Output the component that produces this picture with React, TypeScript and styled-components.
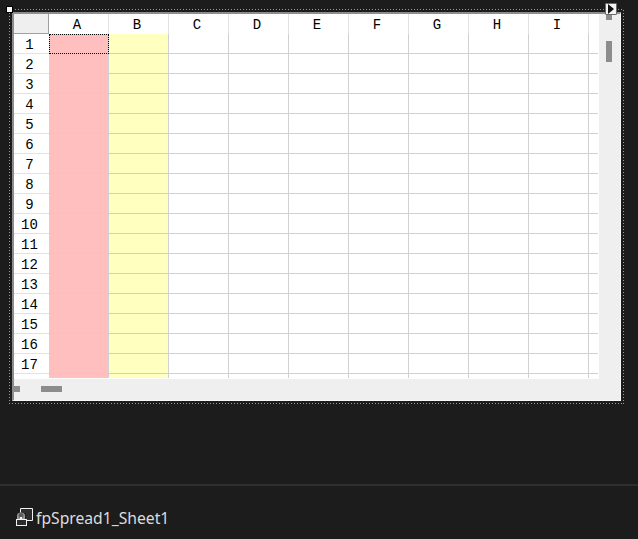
import styled, { createGlobalStyle } from 'styled-components';

const COLUMNS = ['A', 'B', 'C', 'D', 'E', 'F', 'G', 'H', 'I', ''];
const ROWS = Array.from({ length: 18 }, (_, i) => i + 1);
const LAST_LABELLED_ROW = 17;

const GlobalStyle = createGlobalStyle`
  html, body {
    margin: 0;
    padding: 0;
    background: #1c1c1c;
  }
`;

const Page = styled.div`
  width: 638px;
  height: 539px;
  display: flex;
  flex-direction: column;
  overflow: hidden;
  background: #1c1c1c;
`;

const DesignSurface = styled.div`
  height: 484px;
  padding: 9px 0 0 9px;
  box-sizing: border-box;
`;

const SelectionFrame = styled.div`
  position: relative;
  width: 615px;
  height: 395px;
  padding: 3px;
  box-sizing: border-box;
  background:
    repeating-linear-gradient(90deg, #9a9a9a 0 1px, transparent 1px 3px) top left / 100% 1px no-repeat,
    repeating-linear-gradient(90deg, #9a9a9a 0 1px, transparent 1px 3px) bottom left / 100% 1px no-repeat,
    repeating-linear-gradient(0deg, #9a9a9a 0 1px, transparent 1px 3px) top left / 1px 100% no-repeat,
    repeating-linear-gradient(0deg, #9a9a9a 0 1px, transparent 1px 3px) top right / 1px 100% no-repeat;
`;

const GrabHandle = styled.div`
  position: absolute;
  top: -3px;
  left: -3px;
  width: 5px;
  height: 5px;
  background: #fff;
  border: 1px solid #000;
`;

const SmartTag = styled.div`
  position: absolute;
  top: -6px;
  left: 596px;
  width: 10px;
  height: 10px;
  display: flex;
  align-items: center;
  justify-content: center;
  background: #f4f4f4;
  border: 1px solid #6a6a6a;
  border-radius: 1px;
  z-index: 2;
`;

const SpreadControl = styled.div`
  width: 609px;
  height: 389px;
  box-sizing: border-box;
  display: grid;
  grid-template-columns: 585px 21px;
  grid-template-rows: 365px 21px;
  border-top: 2px solid #8d8d8d;
  border-left: 2px solid #8d8d8d;
  border-right: 1px solid #f8f8f8;
  border-bottom: 1px solid #f8f8f8;
  background: #efefef;
`;

const Sheet = styled.div`
  background: #fff;
  padding: 0 1px 1px 0;
  box-sizing: border-box;
  overflow: hidden;
`;

const Grid = styled.div`
  height: 364px;
  overflow: hidden;
  display: grid;
  grid-template-columns: 35px repeat(9, 60px) 9px;
  grid-auto-rows: 20px;
  font-family: "Liberation Mono", monospace;
  font-size: 14px;
  color: #000;
`;

const Corner = styled.div`
  box-sizing: border-box;
  background: #efefef;
  border-right: 1px solid #a0a0a0;
  border-bottom: 1px solid #a0a0a0;
`;

const ColumnHeader = styled.div<{ $last?: boolean }>`
  box-sizing: border-box;
  display: flex;
  align-items: center;
  justify-content: center;
  padding: 1px 3px 0 0;
  background: #fff;
  border-right: ${(p) => (p.$last ? 'none' : '1px solid #e2e2e2')};
`;

const RowHeader = styled.div`
  box-sizing: border-box;
  display: flex;
  align-items: center;
  justify-content: center;
  padding: 3px 4px 0 0;
  background: #fff;
  border-bottom: 1px solid #e2e2e2;
`;

const Cell = styled.div<{ $fill: string; $active?: boolean; $last?: boolean }>`
  position: relative;
  box-sizing: border-box;
  background: ${(p) => p.$fill};
  border-right: ${(p) => (p.$last ? 'none' : '1px solid #d0d0d0')};
  border-bottom: 1px solid #d0d0d0;

  ${(p) =>
    p.$active &&
    `&::after {
      content: '';
      position: absolute;
      inset: 0 -1px -1px 0;
      border: 1px dotted #000;
    }`}
`;

const VerticalScroll = styled.div`
  display: flex;
  flex-direction: column;
  align-items: center;
  padding-right: 1px;
`;

const HorizontalScroll = styled.div`
  display: flex;
  align-items: center;
  padding-bottom: 1px;
  grid-column: 1 / -1;
`;

const ArrowStub = styled.div`
  background: #8c8c8c;
  width: 6px;
  height: 6px;
`;

const Thumb = styled.div<{ $vertical?: boolean }>`
  background: #8c8c8c;
  width: ${(p) => (p.$vertical ? '6px' : '21px')};
  height: ${(p) => (p.$vertical ? '21px' : '6px')};
  margin: ${(p) => (p.$vertical ? '21px 0 0' : '0 0 0 21px')};
`;

const Tray = styled.div`
  flex: 1;
  display: flex;
  align-items: center;
  gap: 3px;
  padding: 8px 0 0 16px;
  border-top: 2px solid #2e2e2e;
`;

const TrayLabel = styled.span`
  font-family: "Noto Sans", sans-serif;
  font-size: 15.7px;
  color: #dcdcdc;
  margin-top: 2px;
`;

const SheetIcon = () => (
  <svg width="17" height="18" viewBox="0 0 17 18" fill="none">
    <path d="M4.5 4.5V0.5H16.5V12.5H10.5" stroke="#f2f2f2" />
    <path d="M5 1H16V12H10V5H5Z" fill="#2c2c2c" />
    <path d="M1 12.5V7.5C1 5.5 3 4.5 5 4.5C7 4.5 9 5.5 9 7.5V12.5" fill="#9a9a9a" />
    <circle cx="5" cy="7.5" r="2.5" fill="#5a5a5a" />
    <rect x="0.5" y="11.5" width="10" height="6" fill="#2c2c2c" stroke="#f2f2f2" />
    <path d="M4 9h2v3H4z" fill="#f2f2f2" />
  </svg>
);

export default function App() {
  return (
    <Page>
      <GlobalStyle />
      <DesignSurface>
        <SelectionFrame>
          <GrabHandle />
          <SmartTag>
            <svg width="6" height="10" viewBox="0 0 6 10">
              <path d="M0 0L6 5L0 10Z" fill="#111" />
            </svg>
          </SmartTag>
          <SpreadControl>
            <Sheet>
              <Grid>
                <Corner />
                {COLUMNS.map((name, i) => (
                  <ColumnHeader key={i} $last={i === COLUMNS.length - 1}>
                    {name}
                  </ColumnHeader>
                ))}
                {ROWS.map((row) => [
                  <RowHeader key={`h${row}`}>{row <= LAST_LABELLED_ROW ? row : ''}</RowHeader>,
                  ...COLUMNS.map((_, c) => (
                    <Cell
                      key={`${row}-${c}`}
                      $fill={c === 0 ? '#ffbfbf' : c === 1 ? '#ffffc0' : '#fff'}
                      $active={row === 1 && c === 0}
                      $last={c === COLUMNS.length - 1}
                    />
                  )),
                ])}
              </Grid>
            </Sheet>
            <VerticalScroll>
              <ArrowStub />
              <Thumb $vertical />
            </VerticalScroll>
            <HorizontalScroll>
              <ArrowStub />
              <Thumb />
            </HorizontalScroll>
          </SpreadControl>
        </SelectionFrame>
      </DesignSurface>
      <Tray>
        <SheetIcon />
        <TrayLabel>fpSpread1_Sheet1</TrayLabel>
      </Tray>
    </Page>
  );
}
